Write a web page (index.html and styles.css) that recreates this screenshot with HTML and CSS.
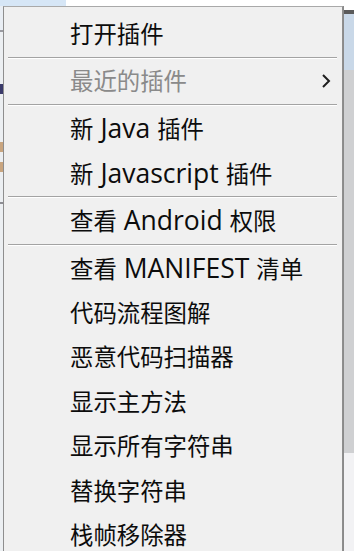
FILE: index.html
```html
<!DOCTYPE html>
<html lang="zh-CN">
<head>
<meta charset="utf-8">
<title>插件菜单</title>
<link rel="stylesheet" href="styles.css">
</head>
<body>
<div class="screen">
  <div class="topbar"><div class="tab"></div></div>
  <div class="main">
    <div class="left-edge"></div>
    <div class="menu">
      <div class="item"><span class="label">打开插件</span></div>
      <div class="sep"></div>
      <div class="item disabled"><span class="label">最近的插件</span>
        <svg class="chev" width="10" height="16" viewBox="0 0 10 16"><path d="M2 2 L8 8 L2 14" fill="none" stroke="#1e1e1e" stroke-width="2"/></svg>
      </div>
      <div class="sep"></div>
      <div class="item"><span class="label">新<span class="lat">Java</span>插件</span></div>
      <div class="item"><span class="label">新<span class="lat">Javascript</span>插件</span></div>
      <div class="sep"></div>
      <div class="item"><span class="label">查看<span class="lat">Android</span>权限</span></div>
      <div class="sep"></div>
      <div class="item"><span class="label">查看<span class="lat">MANIFEST</span>清单</span></div>
      <div class="item"><span class="label">代码流程图解</span></div>
      <div class="item"><span class="label">恶意代码扫描器</span></div>
      <div class="item"><span class="label">显示主方法</span></div>
      <div class="item"><span class="label">显示所有字符串</span></div>
      <div class="item"><span class="label">替换字符串</span></div>
      <div class="item"><span class="label">栈帧移除器</span></div>
    </div>
    <div class="right-edge"></div>
  </div>
</div>
</body>
</html>
```

FILE: styles.css
```css
html, body {
  margin: 0;
  padding: 0;
  background: #ffffff;
}

.screen {
  width: 354px;
  height: 551px;
  overflow: hidden;
  display: flex;
  flex-direction: column;
}

.topbar {
  height: 6px;
  flex: none;
  background: #ffffff;
  display: flex;
}

.tab {
  width: 66px;
  background: #d6e6f6;
}

.main {
  flex: 1;
  display: flex;
  min-height: 0;
}

.left-edge {
  width: 3px;
  flex: none;
  background: linear-gradient(to bottom,
    #e9eef4 0, #e9eef4 24px,
    #9a9aa0 24px, #9a9aa0 26px,
    #eceff2 26px, #eceff2 78px,
    #3a3a6a 78px, #3a3a6a 88px,
    #eceff2 88px, #eceff2 136px,
    #c9a57f 136px, #c9a57f 146px,
    #eceff2 146px, #eceff2 156px,
    #c9a57f 156px, #c9a57f 166px,
    #eceff2 166px, #eceff2 196px,
    #8d8d93 196px, #8d8d93 198px,
    #eceff2 198px, #eceff2 551px);
}

.menu {
  width: 340px;
  flex: none;
  box-sizing: border-box;
  background: #f0f0f0;
  border: 1px solid #8e8e8e;
  border-top-color: #a9a9a9;
  border-bottom: none;
  padding: 4px 0 0 0;
  font-family: "Noto Sans CJK SC", "Noto Sans", sans-serif;
  font-size: 23.4px;
  color: #0c0c0c;
}

.item {
  height: 44.5px;
  display: flex;
  align-items: center;
  padding-left: 66px;
  padding-right: 8px;
  line-height: 1;
  white-space: nowrap;
}

.item.disabled {
  color: #8a8a8a;
  justify-content: space-between;
}

.lat {
  font-family: "Open Sans", "Liberation Sans", sans-serif;
  font-size: 26.5px;
  margin: 0 7px;
}

.chev {
  margin-right: 3px;
}

.sep {
  margin: 1px 5px 0 4px;
  height: 0;
  border-top: 1px solid #a3a3a3;
  border-bottom: 1px solid #ffffff;
}

.right-edge {
  flex: 1;
  border-left: 1px solid #8a8a8a;
  background: linear-gradient(to bottom,
    #ffffff 0, #ffffff 4px,
    #5a5a5a 4px, #5a5a5a 8px,
    #c9d8e8 8px, #c9d8e8 64px,
    #cfd0d2 64px, #cfd0d2 447px,
    #f2f2f4 447px, #f2f2f4 551px);
}
```
